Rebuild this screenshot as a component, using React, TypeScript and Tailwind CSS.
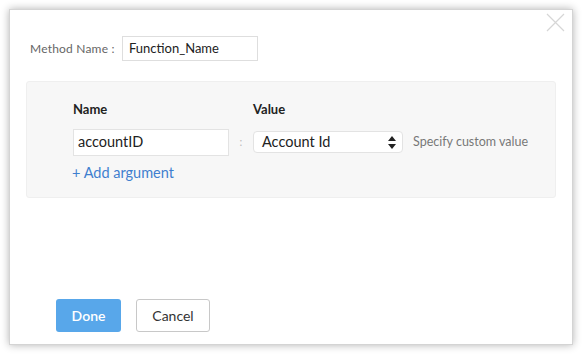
import React from "react";

export default function App() {
  return (
    <div
      className="w-[582px] h-[354px] bg-white pt-[9px] pl-[9px]"
      style={{ fontFamily: "Lato, 'Open Sans', sans-serif" }}
    >
      <div className="relative w-[564px] h-[336px] bg-white border border-[#d4d4d4] shadow-[0_0_8px_rgba(0,0,0,0.3)] flex flex-col">
        <svg
          className="absolute right-[7px] top-[3px]"
          width="19"
          height="19"
          viewBox="0 0 19 19"
        >
          <path d="M1 1L18 18M18 1L1 18" stroke="#d6d6d6" strokeWidth="1.2" />
        </svg>

        <div className="flex items-center pl-[20px] pt-[26px]">
          <span className="text-[12px] tracking-[0.2px] text-[#666] w-[92px]">Method Name :</span>
          <div className="w-[136px] h-[25px] border border-[#dedede] bg-white flex items-center pl-[6px] text-[13px] text-[#222]">
            Function_Name
          </div>
        </div>

        <div className="mx-[16px] mt-[20px] h-[117px] bg-[#f7f7f7] border border-[#efefef] rounded-[3px] pl-[46px] pt-[18px]">
          <div className="flex text-[13px] font-bold text-[#222]">
            <span className="w-[180px]">Name</span>
            <span>Value</span>
          </div>
          <div className="flex items-center mt-[9px]">
            <div className="w-[156px] h-[27px] bg-white border border-[#e3e3e3] flex items-center pl-[4px] text-[14.5px] text-[#222]">
              accountID
            </div>
            <span className="w-[24px] text-center text-[11px] text-[#bbb]">:</span>
            <div className="w-[150px] h-[22px] bg-white border border-[#e3e3e3] rounded-[4px] flex items-center justify-between pl-[8px] pr-[6px] text-[14.5px] text-[#222]">
              <span>Account Id</span>
              <svg width="8" height="13" viewBox="0 0 8 13">
                <path d="M4 0L8 5H0Z M4 13L0 8H8Z" fill="#222" />
              </svg>
            </div>
            <span className="ml-[10px] text-[12.5px] text-[#777]">Specify custom value</span>
          </div>
          <div className="mt-[6px] text-[14.5px] text-[#3f7fcf] -ml-[1px]">+ Add argument</div>
        </div>

        <div className="mt-auto mb-[12px] pl-[46px] flex gap-[15px]">
          <button className="w-[65px] h-[33px] rounded-[3px] bg-[#58a7ea] text-white text-[14px] font-semibold">
            Done
          </button>
          <button className="w-[74px] h-[33px] rounded-[3px] bg-white border border-[#c8c8c8] text-[#333] text-[14px]">
            Cancel
          </button>
        </div>
      </div>
    </div>
  );
}
